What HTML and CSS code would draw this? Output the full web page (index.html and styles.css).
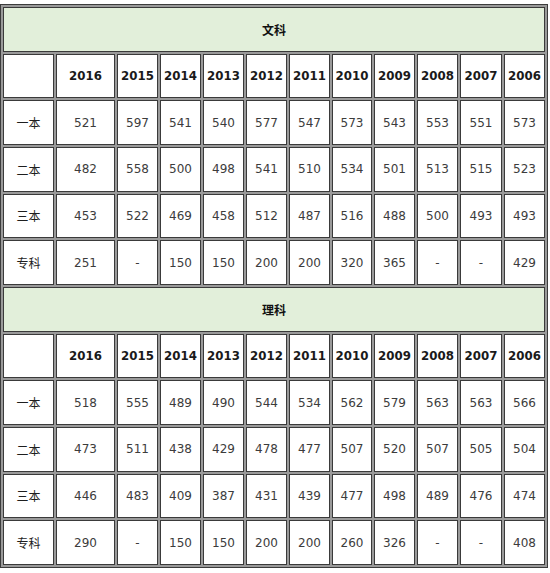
FILE: index.html
```html
<!DOCTYPE html>
<html lang="zh-CN">
<head>
<meta charset="utf-8">
<title>分数线</title>
<link rel="stylesheet" href="styles.css">
</head>
<body>
<table class="scores">
  <colgroup>
    <col class="c-label"><col class="c-wide">
    <col class="c-year"><col class="c-year"><col class="c-year"><col class="c-year"><col class="c-year">
    <col class="c-narrow"><col class="c-year"><col class="c-year"><col class="c-big"><col class="c-year">
  </colgroup>
  <tbody>
    <tr class="section"><th colspan="12">文科</th></tr>
    <tr class="years"><td></td><th>2016</th><th>2015</th><th>2014</th><th>2013</th><th>2012</th><th>2011</th><th>2010</th><th>2009</th><th>2008</th><th>2007</th><th>2006</th></tr>
    <tr><td class="label">一本</td><td>521</td><td>597</td><td>541</td><td>540</td><td>577</td><td>547</td><td>573</td><td>543</td><td>553</td><td>551</td><td>573</td></tr>
    <tr><td class="label">二本</td><td>482</td><td>558</td><td>500</td><td>498</td><td>541</td><td>510</td><td>534</td><td>501</td><td>513</td><td>515</td><td>523</td></tr>
    <tr><td class="label">三本</td><td>453</td><td>522</td><td>469</td><td>458</td><td>512</td><td>487</td><td>516</td><td>488</td><td>500</td><td>493</td><td>493</td></tr>
    <tr><td class="label">专科</td><td>251</td><td>-</td><td>150</td><td>150</td><td>200</td><td>200</td><td>320</td><td>365</td><td>-</td><td>-</td><td>429</td></tr>
    <tr class="section"><th colspan="12">理科</th></tr>
    <tr class="years"><td></td><th>2016</th><th>2015</th><th>2014</th><th>2013</th><th>2012</th><th>2011</th><th>2010</th><th>2009</th><th>2008</th><th>2007</th><th>2006</th></tr>
    <tr><td class="label">一本</td><td>518</td><td>555</td><td>489</td><td>490</td><td>544</td><td>534</td><td>562</td><td>579</td><td>563</td><td>563</td><td>566</td></tr>
    <tr><td class="label">二本</td><td>473</td><td>511</td><td>438</td><td>429</td><td>478</td><td>477</td><td>507</td><td>520</td><td>507</td><td>505</td><td>504</td></tr>
    <tr><td class="label">三本</td><td>446</td><td>483</td><td>409</td><td>387</td><td>431</td><td>439</td><td>477</td><td>498</td><td>489</td><td>476</td><td>474</td></tr>
    <tr><td class="label">专科</td><td>290</td><td>-</td><td>150</td><td>150</td><td>200</td><td>200</td><td>260</td><td>326</td><td>-</td><td>-</td><td>408</td></tr>
  </tbody>
</table>
</body>
</html>
```
FILE: styles.css
```css
html, body {
  margin: 0;
  padding: 0;
  background: #ffffff;
}

.scores {
  margin: 4px 0 0 0;
  width: 548px;
  table-layout: fixed;
  border-collapse: separate;
  border-spacing: 2px;
  border: 1px solid #3c3c3c;
  background: #9a9a9a;
  font-family: "DejaVu Sans", "Noto Sans CJK SC", sans-serif;
  font-size: 12px;
}

.c-label { width: 51px; }
.c-wide { width: 59px; }
.c-year { width: 41px; }
.c-narrow { width: 40px; }
.c-big { width: 42px; }

.scores td,
.scores th {
  box-sizing: border-box;
  height: 44.67px;
  padding: 0;
  border: 1px solid #3a3a3a;
  background: #ffffff;
  text-align: center;
  vertical-align: middle;
  color: #3c3c3c;
  font-weight: normal;
  white-space: nowrap;
}

.scores .section th {
  background: #e2efda;
  color: #111111;
  font-weight: bold;
  font-family: "Noto Sans CJK SC", sans-serif;
  font-size: 12px;
}

.scores .years th {
  color: #1a1a1a;
  font-weight: bold;
  font-size: 11.8px;
}

.scores .label {
  color: #1e1e1e;
  font-family: "Noto Sans CJK SC", sans-serif;
}
```
